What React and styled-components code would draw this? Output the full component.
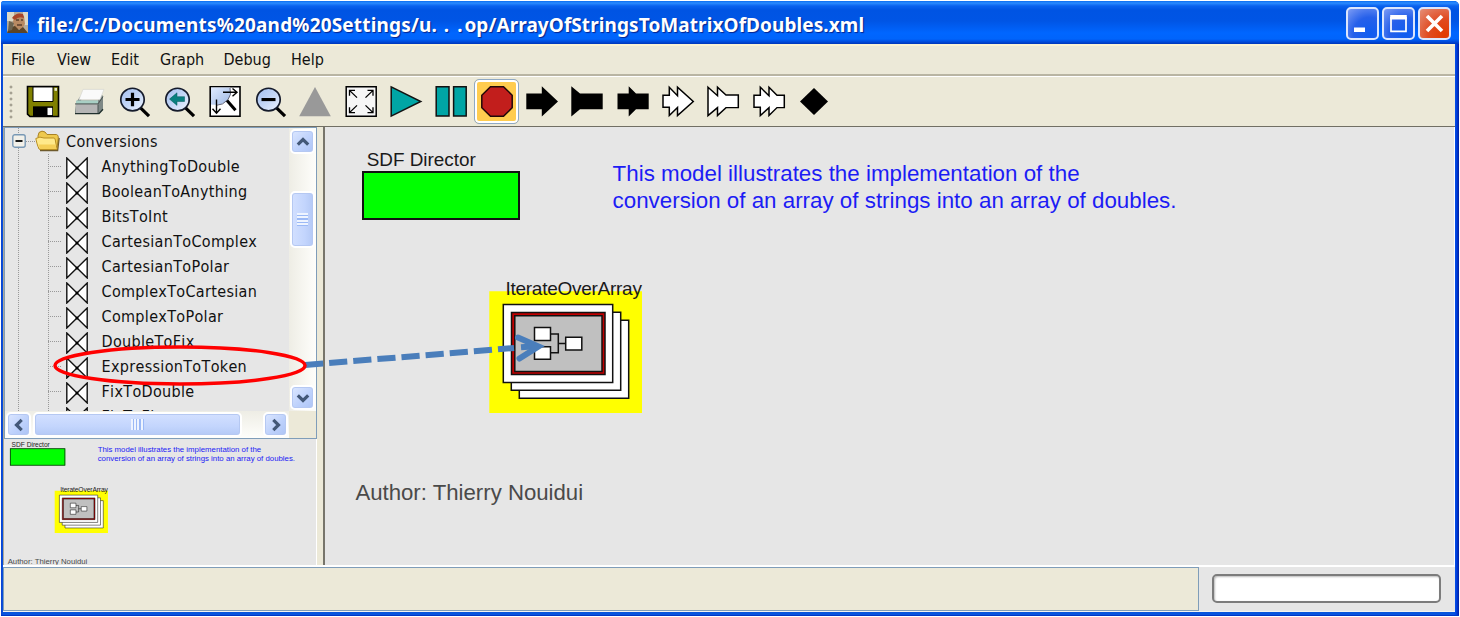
import React from "react";
import styled, { createGlobalStyle } from "styled-components";

const Global = createGlobalStyle`
  *, *::before, *::after { box-sizing: border-box; }
  body { margin: 0; background: #fff; overflow: hidden; }
`;

const uiFont = `"DejaVu Sans Condensed", "DejaVu Sans", sans-serif`;
const sceneFont = `"Liberation Sans", Arial, sans-serif`;

const Page = styled.div`
  width: 1460px;
  height: 617px;
  padding: 1px 1px 1px 1px;
  background: #fff;
`;

const Window = styled.div`
  position: relative;
  display: flex;
  flex-direction: column;
  width: 1458px;
  height: 615px;
  padding: 0 4px 3px 2px;
  background: linear-gradient(90deg, #0a3fd0 0, #0855dd 2px, #0855dd 1453px, #0046e8 1455px, #001ea0 1458px);
  border-radius: 3px 5px 0 0;
  border-bottom: 1px solid #0036c8;
  font-family: ${uiFont};
`;

const TitleBar = styled.header`
  display: flex;
  align-items: center;
  flex: none;
  height: 43px;
  margin: 0 -4px 0 -2px;
  padding: 0 8px 0 6px;
  border-radius: 3px 5px 0 0;
  background: linear-gradient(180deg, #0a6cf0 0, #2b8cff 2px, #0a62ee 5px, #0054e3 9px, #0055e5 20px, #0066ff 32px, #0064fb 38px, #0048d8 41px, #0036b8 43px);
`;

const Title = styled.h1`
  flex: 1;
  margin: 5px 0 0 9px;
  font: 700 19px/24px "Noto Sans", "Open Sans", sans-serif;
  color: #fff;
  text-shadow: 1px 1px 1px #06238c;
  white-space: pre;
`;

const TitlePart = styled.span`
  letter-spacing: ${(p) => p.$spacing}px;
`;

const TitleButtons = styled.div`
  display: flex;
  gap: 3px;
`;

const TitleButton = styled.button`
  width: 33px;
  height: 33px;
  padding: 0;
  margin-top: 2px;
  border: 2px solid #dbe6fd;
  border-radius: 5px;
  background: ${(p) =>
    p.$close
      ? "radial-gradient(circle at 85% 90%, #e23a00 0, #e04a20 45%, #e58f78 100%)"
      : "radial-gradient(circle at 75% 85%, #0f5cf0 0, #2660ea 50%, #7d9cf5 100%)"};
  svg { display: block; }
`;

const MenuBar = styled.nav`
  display: flex;
  flex: none;
  height: 33px;
  padding-left: 8px;
  border-top: 2px solid #fbf3d4;
  border-bottom: 1px solid #fff;
  background: linear-gradient(#ece9d8 0 28px, #b9b5a3 28px 30px);
`;

const MenuItem = styled.span`
  width: ${(p) => p.$width}px;
  font-size: 16px;
  line-height: 27px;
  color: #111;
`;

const ToolBar = styled.div`
  display: flex;
  align-items: center;
  flex: none;
  height: 49px;
  background: #ece9d8;
`;

const Grip = styled.div`
  width: 4px;
  height: 36px;
  margin: 0 7.6px 0 6px;
  background: radial-gradient(circle, #a5a192 1.3px, transparent 1.7px) 0 0 / 4px 6px;
`;

const ToolButton = styled.div`
  display: flex;
  align-items: center;
  justify-content: center;
  width: 45.33px;
  height: 48px;
  svg { display: block; overflow: visible; margin-bottom: 1px; }
`;

const Pressed = styled.div`
  display: flex;
  align-items: center;
  justify-content: center;
  width: 45px;
  height: 45px;
  flex: none;
  border: 1.5px solid #8fa9c4;
  border-radius: 5px;
  background: #ffcc4f;
  box-shadow: inset 0 0 0 2px #fff;
`;

const Main = styled.div`
  display: flex;
  flex: none;
  height: 440px;
  border-top: 1px solid #716f64;
  border-bottom: 1px solid #fff;
  background: #ece9d8;
`;

const Side = styled.aside`
  display: flex;
  flex-direction: column;
  width: 314px;
  border-right: 1px solid #fff;
  border-left: 1px solid #aca899;
`;

const Library = styled.section`
  display: grid;
  grid-template: 283px 27px / 284px 27px;
  flex: none;
  height: 312px;
  width: 313px;
  border: 1px solid #7f9db9;
  background: #ece9d8;
`;

const Tree = styled.div`
  overflow: hidden;
  background:
    repeating-linear-gradient(#999 0 1px, transparent 1px 2px) 13px 0 / 1px 100% no-repeat,
    #e6e6e6;
`;

const TreeRow = styled.div`
  display: flex;
  align-items: center;
  height: 25px;
  font-size: 16px;
  font-kerning: none;
  letter-spacing: 0.33px;
  color: #111;
  white-space: nowrap;
`;

const FolderRow = styled(TreeRow)`
  height: 26px;
  padding-left: 7px;
`;

const Children = styled.div`
  padding-left: 43px;
  background: repeating-linear-gradient(#999 0 1px, transparent 1px 2px) 43px 0 / 1px 100% no-repeat;
`;

const Branch = styled.i`
  flex: none;
  width: ${(p) => p.$width}px;
  height: 1px;
  background: repeating-linear-gradient(90deg, #999 0 1px, transparent 1px 2px);
`;

const RelationIcon = styled.svg`
  flex: none;
  margin: 2px 0 0 4px;
`;

const FolderIcon = styled.svg`
  flex: none;
  margin-right: 6px;
`;

const Leaf = styled.span`
  margin-left: 13.5px;
`;

const Scroll = styled.div`
  display: flex;
  flex-direction: ${(p) => (p.$horizontal ? "row" : "column")};
  padding: 1px;
  background: linear-gradient(${(p) => (p.$horizontal ? "180deg" : "90deg")}, #eeede5, #fefefb);
`;

const ScrollButton = styled.div`
  flex: none;
  display: flex;
  align-items: center;
  justify-content: center;
  width: 25px;
  height: 25px;
  border: 2px solid #fff;
  border-radius: 5px;
  background: linear-gradient(135deg, #dce7ff, #bcd0fb 60%, #adc4f5);
  box-shadow: inset 0 0 0 1px #b5c8f2;
`;

const Thumb = styled(ScrollButton)`
  width: ${(p) => p.$w}px;
  height: ${(p) => p.$h}px;
  margin: ${(p) => p.$margin};
  background: linear-gradient(${(p) => (p.$w > p.$h ? "180deg" : "90deg")}, #d3e0ff, #c3d5fd 60%, #b4c9f6);
`;

const ThumbGrip = styled.i`
  width: ${(p) => (p.$horizontal ? 13 : 11)}px;
  height: ${(p) => (p.$horizontal ? 11 : 13)}px;
  background: repeating-linear-gradient(${(p) => (p.$horizontal ? "90deg" : "180deg")}, #eef4ff 0 2px, #9bb9f6 2px 3.25px);
`;

const Overview = styled.section`
  position: relative;
  flex: 1;
  overflow: hidden;
  background: #e6e6e6;
`;

const Canvas = styled.main`
  position: relative;
  flex: 1;
  margin-left: 6px;
  overflow: hidden;
  border-left: 2px solid #77756b;
  border-right: 1px solid #fff;
  background: #e6e6e6;
`;

const SceneBox = styled.div`
  position: absolute;
  left: ${(p) => p.$x || 0}px;
  top: ${(p) => p.$y || 0}px;
  width: 1127px;
  height: 438px;
  transform: scale(${(p) => p.$scale || 1});
  transform-origin: 0 0;
  font-family: ${sceneFont};
`;

const Label = styled.div`
  position: absolute;
  left: ${(p) => p.$x}px;
  top: ${(p) => p.$y}px;
  font-size: ${(p) => p.$size}px;
  line-height: ${(p) => p.$leading || 24}px;
  letter-spacing: ${(p) => p.$spacing || 0}px;
  color: ${(p) => p.$color || "#1a1a1a"};
  white-space: pre;
`;

const Director = styled.div`
  position: absolute;
  left: 37px;
  top: 44px;
  width: 158px;
  height: 49px;
  border: 2px solid #111;
  background: #0f0;
`;

const Composite = styled.svg`
  position: absolute;
  left: 164px;
  top: 164px;
`;

const Footer = styled.footer`
  display: flex;
  flex: none;
  height: 46px;
  background: #e6e6e6;
  border-top: 1px solid #fff;
  border-bottom: 1px solid #f4f4f0;
`;

const Status = styled.div`
  width: 1196px;
  height: 44px;
  border: 1.5px solid #7f9db9;
  background: #ece9d8;
`;

const Progress = styled.div`
  width: 229px;
  height: 29px;
  margin: 7px 0 0 13px;
  border: 2px solid #7c7c7c;
  border-radius: 5px;
  background: #fff;
  box-shadow: inset 1px 1px 2px #bbb;
`;

const Annotation = styled.svg`
  position: absolute;
  left: -1px;
  top: -1px;
  pointer-events: none;
`;

const Lens = ({ children }) => (
  <>
    <path d="M22 22L31 31" stroke="#000" strokeWidth="3.2" />
    <circle cx="14.5" cy="14" r="11.7" fill="url(#lens)" stroke="#151b2b" strokeWidth="1.7" />
    {children}
  </>
);

const line = { fill: "none", stroke: "#000", strokeWidth: 1.4 };
const outline = { fill: "#fff", stroke: "#000", strokeWidth: 1.5 };

const tools = [
  ["save", <>
    <path d="M.5.5H31.5V31.5H3L.5 29z" fill="#808000" stroke="#000" strokeWidth="1.6" />
    <path d="M6 1H26V16H6z" fill="#fff" stroke="#000" strokeWidth="1" />
    <path d="M27.5 2h2.5v3h-2.5z" fill="#e6e6c8" />
    <path d="M6 21H26V31H6z" fill="#000" />
    <path d="M20.5 22.5h4.7V30h-4.7z" fill="#fff" />
  </>],
  ["print", <>
    <path d="M3 17L7 11H9L8 15H25L28 9 30 10V24L26 29H4Q2 29 2 27z" fill="#7e8886" />
    <path d="M10 3.5H31L27 14H6z" fill="#fafafa" stroke="#d6d6d0" strokeWidth=".7" />
    <path d="M3 15H25V18.5H3z" fill="#a8cfc4" />
    <path d="M3 18.5H25V28H3z" fill="#b5b5b5" />
    <path d="M2 18.5H25L30 11M25 19V28.5" fill="none" stroke="#48524f" />
    <path d="M2 28.5H26L30 24" fill="none" stroke="#20302d" strokeWidth="1.4" />
  </>],
  ["zoomIn", <Lens><path d="M7.5 14H21.5M14.5 7V21" stroke="#000" strokeWidth="3.2" /></Lens>],
  ["zoomReset", <Lens><path d="M6.5 13.5L14 7V11H21.5V16H14V20z" fill="#087f7f" stroke="#055" strokeWidth=".5" /></Lens>],
  ["zoomFit", <>
    <path d="M1.2.8H31V31.2H1.2z" fill="#fff" stroke="#000" strokeWidth="1.6" />
    <path d="M2 1.5H21Q23 9 19 14 14 21 2 19z" fill="url(#lensFit)" />
    <path d="M21 2Q23 9 19 14 14 20 7 20" fill="none" stroke="#667" strokeWidth="1" />
    <path d="M18 15L26.5 25" stroke="#000" strokeWidth="3" />
    <path d="M14 6.5H27M23.5 2.5L28 6.5 23.5 10.5M7.5 14V27M3.5 23.5L7.5 28 11.5 23.5" {...line} />
  </>],
  ["zoomOut", <Lens><path d="M7.5 14H21.5" stroke="#000" strokeWidth="3.2" /></Lens>],
  ["up", <path d="M16 1L31.8 31.3H.2z" fill="#999" />],
  ["fullScreen", <>
    <path d="M1.2.8H31.2V31.2H1.2z" fill="#f6f6f6" stroke="#000" strokeWidth="1.5" />
    <path d="M12 12L4.5 4.5M4.5 10V4.5H10M20.5 12L28 4.5M22.5 4.5H28V10M12 20L4.5 27.5M4.5 22V27.5H10M20.5 20L28 27.5M22.5 27.5H28V22" {...line} strokeWidth="1.3" />
  </>],
  ["run", <path d="M1.2 1L30.8 16 1.2 31z" fill="#00a5a5" stroke="#111" strokeWidth="1.5" />],
  ["pause", <path d="M1.2 .8H14V31H1.2zM18.6 .8H31.2V31H18.6z" fill="#00a5a5" stroke="#111" strokeWidth="1.5" />],
  ["stop", <path d="M9.5 .8H22.5L31.2 9.5V22.5L22.5 31.2H9.5L.8 22.5V9.5z" fill="#c21e1c" stroke="#210808" strokeWidth="1.5" />],
  ["input", <path d="M.3 7.8H15.8V.3L32 16 15.8 31.5V24H.3z" />],
  ["output", <path d="M.3.3L9 7.8H31.7V24H9L.3 31.5z" />],
  ["inout", <path d="M.5 7.8H11.7V.3L19 7.8H31.7V24H19L11.7 31.5V24H.5z" />],
  ["multiInput", <path d="M1 9.5H7.3V1.3L15.5 10V1.3L31.3 16 15.5 30.5V22.3L7.3 30.5V22H1z" {...outline} />],
  ["multiOutput", <path d="M1 1.3L10.5 10V1.3L19 9.3H31.3V22.3H19L10.5 30.5V22.3L1 30.5z" {...outline} />],
  ["multiInout", <path d="M1 9.5H7.3V1.3L16 10V1.3L24 9.5H31.3V22.3H24L16 30.5V22.3L7.3 30.5V22H1z" {...outline} />],
  ["relation", <path d="M16 2L30 16 16 30 2 16z" />],
];

const Relation = () => (
  <RelationIcon width="22" height="22" viewBox="0 0 22 22">
    <path d="M.8 1L21.2 21V1L.8 21z" fill="#fff" stroke="#111" strokeWidth="1.4" />
    <circle cx="11" cy="11" r="1.5" />
  </RelationIcon>
);

const Chevron = ({ turn = 0 }) => (
  <svg width="16" height="16" viewBox="0 0 16 16">
    <path d="M2.8 10.7L8 5.5 13.2 10.7" transform={`rotate(${turn} 8 8)`} fill="none" stroke="#435878" strokeWidth="3.2" />
  </svg>
);

const Expander = () => (
  <svg width="14" height="14" viewBox="0 0 14 14">
    <rect x=".8" y=".8" width="12.4" height="12.4" rx="2" fill="#f2f0e9" stroke="#7898b5" strokeWidth="1.4" />
    <path d="M3.5 7H10.5" stroke="#000" strokeWidth="1.8" />
  </svg>
);

const Folder = () => (
  <FolderIcon width="25" height="22" viewBox="0 0 25 22">
    <path d="M5 20.5H22.5L24 8" fill="none" stroke="#6e5a2c" strokeWidth="1.6" />
    <path d="M3 6L4 2.5Q7 0 10 2L12 4.5H20Q23.5 4 23.3 8L22 19H4z" fill="#eec94e" stroke="#a98224" />
    <path d="M.8 8.5Q5 6 9 8H19Q20 8 20.3 10L22 19.5H5Q3 19 .8 8.5z" fill="#ffe98a" stroke="#b98f22" />
    <path d="M3.5 14.5H20.5L21.5 19H5z" fill="#f5cf57" />
  </FolderIcon>
);

const treeItems = [
  "AnythingToDouble", "BooleanToAnything", "BitsToInt", "CartesianToComplex",
  "CartesianToPolar", "ComplexToCartesian", "ComplexToPolar", "DoubleToFix",
  "ExpressionToToken", "FixToDouble", "FixToFix",
];

const menus = [["File", 46], ["View", 54], ["Edit", 49], ["Graph", 63.5], ["Debug", 67.5], ["Help", 50]];

const Scene = (props) => (
  <SceneBox {...props}>
    <Label $x={41.7} $y={20.5} $size={18.9}>SDF Director</Label>
    <Director />
    <Label $x={287.6} $y={32.5} $size={22.35} $leading={27.5} $color="#1c1cf5">
      {"This model illustrates the implementation of the\nconversion of an array of strings into an array of doubles."}
    </Label>
    <Composite width="154" height="122" viewBox="489 291 154 122">
      <path d="M489.3 291.3H642V413H489.3z" fill="#ff0" />
      <g fill="#fff" stroke="#111" strokeWidth="1.5">
        <path d="M519.3 320.3H628.7V398.3H519.3z" />
        <path d="M511.3 312.3H620.7V390.3H511.3z" />
        <path d="M503.3 304.5H612.7V382.5H503.3z" />
        <path d="M511.5 312.5H605V374.5H511.5z" fill="#c00000" />
        <path d="M514.8 315.8H602V371.5H514.8z" fill="#c0c0c0" />
        <path d="M550.5 334H558.3V352.7H550.5M558.3 343.5H565.7" fill="none" />
        <path d="M534.5 327.5H550.5V340.5H534.5zM534.5 346.7H550.5V359.3H534.5zM565.7 337.3H581.8V350H565.7z" />
      </g>
    </Composite>
    <Label $x={180.5} $y={149.5} $size={19} $spacing={-0.27}>IterateOverArray</Label>
    <Label $x={30.4} $y={353.5} $size={22.2} $color="#4a4a4a">Author: Thierry Nouidui</Label>
  </SceneBox>
);

export default function App() {
  return (
    <Page>
      <Global />
      <Window>
        <TitleBar>
          <svg width="21" height="21" viewBox="0 0 21 21">
            <path d="M0 0H21V21H0z" fill="#b5ab9a" />
            <path d="M0 0H7V9H0zM16 0H21V13H16z" fill="#ddd9c6" />
            <path d="M7 4Q12-1 17 4L18 12 15 17H8L6 10z" fill="#b98a62" />
            <path d="M5 6Q9 0 16 2L17 6Q11 4 8 8z" fill="#a8452a" />
            <path d="M9 8H12M14 8H16M10 13H15" stroke="#5b3f2c" strokeWidth="1.3" />
            <path d="M0 21Q1 15 8 14L12 18 16 15 21 21z" fill="#5b4428" />
            <path d="M2 9L7 11 5 18 1 19z" fill="#6d6450" />
          </svg>
          <Title>
            <TitlePart $spacing={0.17}>file:/C:/Documents%20and%20Settings/u.</TitlePart>
            <TitlePart $spacing={1.7}>{" . ."}</TitlePart>
            <TitlePart $spacing={0.08}>op/ArrayOfStringsToMatrixOfDoubles.xml</TitlePart>
          </Title>
          <TitleButtons>
            <TitleButton aria-label="Minimize">
              <svg width="29" height="29"><path d="M6 18.5H17V23H6z" fill="#fff" /></svg>
            </TitleButton>
            <TitleButton aria-label="Maximize">
              <svg width="29" height="29"><path d="M7 8V22.3H22V8" fill="none" stroke="#fff" strokeWidth="1.7" /><path d="M6.2 6H22.8V10.5H6.2z" fill="#fff" /></svg>
            </TitleButton>
            <TitleButton $close aria-label="Close">
              <svg width="29" height="29"><path d="M7 7L22 22M22 7L7 22" stroke="#fff" strokeWidth="3.6" /></svg>
            </TitleButton>
          </TitleButtons>
        </TitleBar>
        <MenuBar>
          {menus.map(([name, width]) => <MenuItem key={name} $width={width}>{name}</MenuItem>)}
        </MenuBar>
        <ToolBar>
          <svg width="0" height="0">
            <defs>
              <linearGradient id="lens" x1="0" y1="0" x2="1" y2="1">
                <stop offset="0" stopColor="#a3bff0" />
                <stop offset=".5" stopColor="#c3d6f6" />
                <stop offset="1" stopColor="#eef4ff" />
              </linearGradient>
              <linearGradient id="lensFit" x1="0" y1="0" x2="1" y2="1">
                <stop offset="0" stopColor="#dfeaff" />
                <stop offset="1" stopColor="#9fb9e4" />
              </linearGradient>
            </defs>
          </svg>
          <Grip />
          {tools.map(([name, art]) => {
            const icon = <svg width="32" height="31" viewBox="0 0 32 32" preserveAspectRatio="none">{art}</svg>;
            return <ToolButton key={name}>{name === "stop" ? <Pressed>{icon}</Pressed> : icon}</ToolButton>;
          })}
        </ToolBar>
        <Main>
          <Side>
            <Library>
              <Tree>
                <FolderRow><Expander /><Branch $width={9} /><Folder />Conversions</FolderRow>
                <Children>
                  {treeItems.map((name) => (
                    <TreeRow key={name}><Branch $width={14} /><Relation /><Leaf>{name}</Leaf></TreeRow>
                  ))}
                </Children>
              </Tree>
              <Scroll>
                <ScrollButton><Chevron /></ScrollButton>
                <Thumb $w={25} $h={57} $margin="37px 0 auto"><ThumbGrip /></Thumb>
                <ScrollButton><Chevron turn={180} /></ScrollButton>
              </Scroll>
              <Scroll $horizontal>
                <ScrollButton><Chevron turn={-90} /></ScrollButton>
                <Thumb $w={209} $h={25} $margin="0 auto 0 2px"><ThumbGrip $horizontal /></Thumb>
                <ScrollButton><Chevron turn={90} /></ScrollButton>
              </Scroll>
            </Library>
            <Overview><Scene $x={-7} $y={-5.8} $scale={0.35} /></Overview>
          </Side>
          <Canvas><Scene /></Canvas>
        </Main>
        <Footer>
          <Status />
          <Progress />
        </Footer>
        <Annotation width="1460" height="617" viewBox="0 0 1460 617">
          <path d="M305 365L514 348M521 347.3L532 346.5" stroke="#4a7ebb" strokeWidth="6" strokeDasharray="18.2 6" />
          <path d="M518 337.5L538.5 346.5 519.5 358.5" fill="none" stroke="#4a7ebb" strokeWidth="6" strokeLinecap="round" />
          <ellipse cx="180" cy="365.5" rx="125" ry="18.5" fill="none" stroke="#f00" strokeWidth="3.5" />
        </Annotation>
      </Window>
    </Page>
  );
}
